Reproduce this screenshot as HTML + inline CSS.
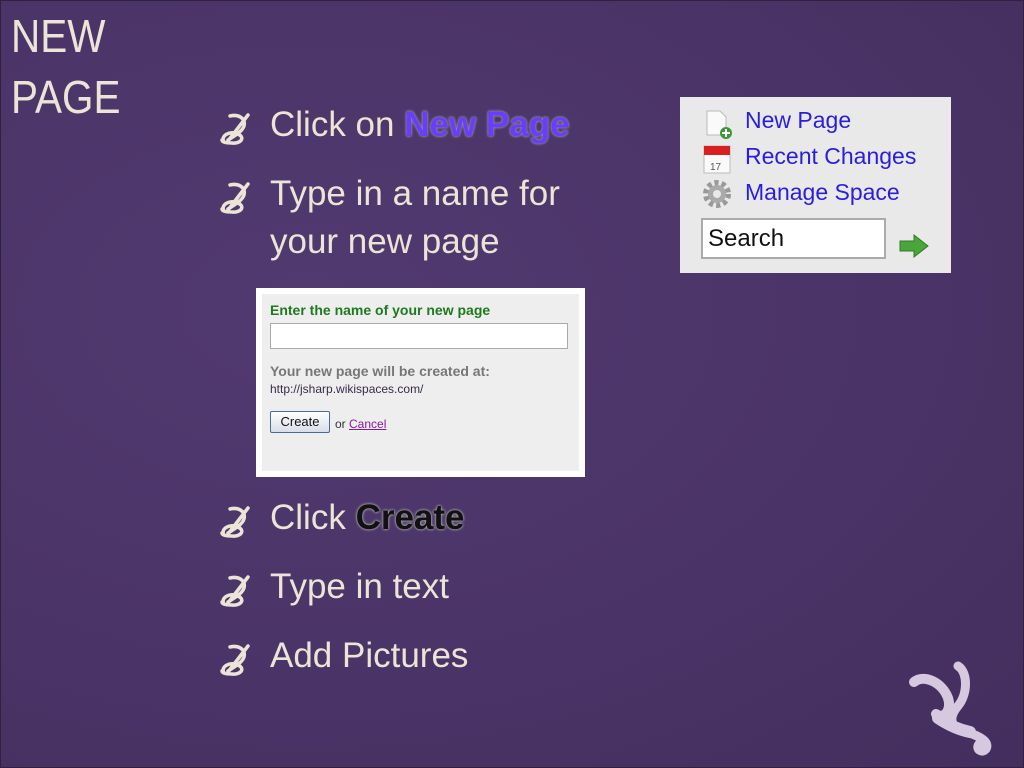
<!DOCTYPE html>
<html><head><meta charset="utf-8"><style>
body{margin:0;width:1024px;height:768px;overflow:hidden;background:#4b3468;font-family:"Liberation Sans",sans-serif;position:relative}
.bg{position:absolute;inset:0;background:radial-gradient(ellipse at 30% 40%,#513a70 0%,#4a3366 60%,#432e5e 100%);border:1px solid #2e2240;box-sizing:border-box}
.t{position:absolute;color:#ece4d6;white-space:nowrap}
.title{left:11px;font-size:46px;line-height:61px;top:6px;transform:scaleX(0.88);transform-origin:left top}
.b{font-size:35px;left:270px}
.bul{position:absolute;left:218px;width:40px;height:36px}
.np{color:#6a3cff;font-weight:bold;text-shadow:0 0 2px #999,0 0 3px #888}
.cr{color:#111;font-weight:bold;text-shadow:0 0 2px #bbb,0 0 3px #999}
</style></head><body>
<div class="bg"></div>
<div class="t title">NEW<br>PAGE</div>

<svg width="0" height="0" style="position:absolute"><defs><g id="bu"><path d="M30 5 L10 31 M12 6 C20 4 28 8 26 16 C24 22 16 26 10 30 M6 32 C2 26 12 20 20 24 C28 28 22 34 14 33 C8 33 4 32 4 30" fill="none" stroke="#ece4d6" stroke-width="3.5" stroke-linecap="round"/></g></defs></svg>
<svg class="bul" style="top:110px" viewBox="0 0 40 36"><use href="#bu"/></svg>
<svg class="bul" style="top:179px" viewBox="0 0 40 36"><use href="#bu"/></svg>
<svg class="bul" style="top:503px" viewBox="0 0 40 36"><use href="#bu"/></svg>
<svg class="bul" style="top:572px" viewBox="0 0 40 36"><use href="#bu"/></svg>
<svg class="bul" style="top:641px" viewBox="0 0 40 36"><use href="#bu"/></svg>

<div class="t b" style="top:105px">Click on <span class="np">New Page</span></div>
<div class="t b" style="top:174px">Type in a name for</div>
<div class="t b" style="top:222px">your new page</div>
<div class="t b" style="top:498px">Click <span class="cr">Create</span></div>
<div class="t b" style="top:567px">Type in text</div>
<div class="t b" style="top:636px">Add Pictures</div>

<div style="position:absolute;left:256px;top:288px;width:329px;height:189px;background:#fff">
 <div style="position:absolute;left:6px;top:6px;width:317px;height:177px;background:#eeeeee;font-family:'Liberation Sans',sans-serif">
  <div style="position:absolute;left:8px;top:8px;font-size:14px;font-weight:bold;color:#1d7a1d">Enter the name of your new page</div>
  <div style="position:absolute;left:8px;top:29px;width:296px;height:24px;background:#fff;border:1px solid #aaa"></div>
  <div style="position:absolute;left:8px;top:69px;font-size:14px;font-weight:bold;color:#777">Your new page will be created at:</div>
  <div style="position:absolute;left:8px;top:88px;font-size:12px;color:#3a2a4a">http://jsharp.wikispaces.com/</div>
  <div style="position:absolute;left:8px;top:117px;width:58px;height:20px;border:1px solid #4a6a9a;border-radius:2px;background:linear-gradient(#fff,#d8dde8);font-size:13px;text-align:center;line-height:19px;color:#111">Create</div>
  <div style="position:absolute;left:73px;top:123px;font-size:12px;color:#333">or <span style="color:#8a1a9a;text-decoration:underline">Cancel</span></div>
 </div>
</div>

<div style="position:absolute;left:680px;top:97px;width:271px;height:176px;background:#e9e9e9">
 <svg style="position:absolute;left:24px;top:12px" width="30" height="30" viewBox="0 0 30 30"><path d="M3 2h13l6 6v18H3z" fill="#fafafa" stroke="#bbb"/><circle cx="22" cy="24" r="6" fill="#3a9a3a"/><path d="M22 20v8M18 24h8" stroke="#fff" stroke-width="2"/></svg>
 <div style="position:absolute;left:65px;top:10px;font-size:23px;color:#2a1de0">New Page</div>
 <svg style="position:absolute;left:22px;top:46px" width="30" height="32" viewBox="0 0 30 32"><rect x="2" y="3" width="26" height="27" fill="#fafafa" stroke="#bbb"/><rect x="2" y="3" width="26" height="9" fill="#d92020"/><text x="8" y="27" font-size="10" fill="#555" font-family="Liberation Sans">17</text></svg>
 <div style="position:absolute;left:65px;top:46px;font-size:23px;color:#2a1de0">Recent Changes</div>
 <svg style="position:absolute;left:20px;top:81px" width="34" height="32" viewBox="0 0 34 32"><circle cx="17" cy="16" r="11" fill="none" stroke="#999" stroke-width="6" stroke-dasharray="4 3"/><circle cx="17" cy="16" r="9" fill="#aaa"/><circle cx="17" cy="16" r="4" fill="#e9e9e9"/></svg>
 <div style="position:absolute;left:65px;top:82px;font-size:23px;color:#2a1de0">Manage Space</div>
 <div style="position:absolute;left:21px;top:121px;width:185px;height:41px;background:#fff;border:2px solid #aaa;box-sizing:border-box;font-size:24px;line-height:37px;padding-left:5px;color:#111">Search</div>
 <svg style="position:absolute;left:218px;top:136px" width="32" height="26" viewBox="0 0 32 26"><path d="M2 8h14V2l14 11-14 11v-6H2z" fill="#4aa63a" stroke="#2e7a22"/></svg>
</div>

<svg style="position:absolute;left:880px;top:650px" width="144" height="118" viewBox="0 0 144 118">
<g fill="none" stroke="#d6c8de" stroke-linecap="round">
<path d="M34 32 C44 24 62 32 68 48 C72 60 64 70 56 64" stroke-width="10"/>
<path d="M78 16 C88 22 88 44 78 56 C68 68 70 78 86 82 C100 86 110 92 106 99 C102 104 95 99 99 94" stroke-width="9"/>
<path d="M58 68 C70 76 80 80 90 82" stroke-width="12"/>
</g></svg>
</body></html>
